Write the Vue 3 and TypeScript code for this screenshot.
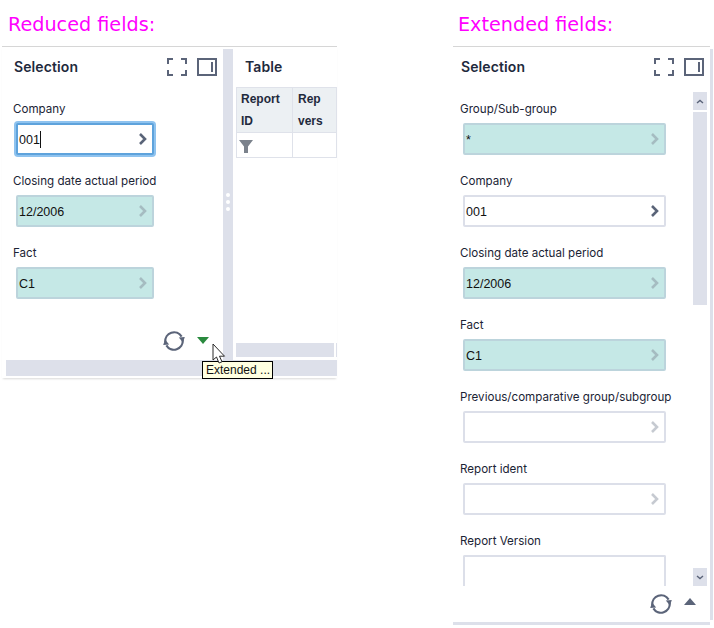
<script setup lang="ts">
interface Field { label: string; value: string; kind: 'green' | 'plain' | 'empty'; cut?: boolean; noChevron?: boolean }
const reduced: Field[] = [
  { label: 'Closing date actual period', value: '12/2006', kind: 'green' },
  { label: 'Fact', value: 'C1', kind: 'green' },
]
const extended: Field[] = [
  { label: 'Group/Sub-group', value: '*', kind: 'green' },
  { label: 'Company', value: '001', kind: 'plain' },
  { label: 'Closing date actual period', value: '12/2006', kind: 'green' },
  { label: 'Fact', value: 'C1', kind: 'green' },
  { label: 'Previous/comparative group/subgroup', value: '', kind: 'empty' },
  { label: 'Report ident', value: '', kind: 'empty' },
  { label: 'Report Version', value: '', kind: 'empty', cut: true, noChevron: true },
]
</script>

<template>
  <div class="page">
    <section class="left">
      <h2 class="caption">Reduced fields:</h2>
      <div class="frame">
        <div class="main">
          <div class="pane">
            <header class="head">
              <span class="title">Selection</span>
              <svg class="ico" width="20" height="18" viewBox="0 0 20 18"><path d="M1 6V1H6M14 1H19V6M19 12V17H14M6 17H1V12" fill="none" stroke="#5b6479" stroke-width="2" /></svg>
              <svg class="ico gap" width="20" height="18" viewBox="0 0 20 18"><rect x="1" y="1" width="18" height="16" fill="none" stroke="#5b6479" stroke-width="2" /><path d="M15 4V14" stroke="#5b6479" stroke-width="2" /></svg>
            </header>
            <div class="fields">
              <div class="field">
                <label class="lbl">Company</label>
                <div class="box focus">
                  <span class="val">001</span><i class="caret"></i>
                  <svg class="chev" width="9" height="14" viewBox="0 0 9 14"><path d="M2 2L7 7L2 12" fill="none" stroke="#5a6478" stroke-width="2.6" /></svg>
                </div>
              </div>
              <div v-for="f in reduced" :key="f.label" class="field">
                <label class="lbl">{{ f.label }}</label>
                <div class="box green">
                  <span class="val">{{ f.value }}</span>
                  <svg class="chev" width="9" height="14" viewBox="0 0 9 14"><path d="M2 2L7 7L2 12" fill="none" stroke="#a5bcc1" stroke-width="2.6" /></svg>
                </div>
              </div>
            </div>
            <footer class="foot">
              <svg width="22" height="22" viewBox="0 0 22 22"><path d="M2.3 12A8.8 8.8 0 0 1 18.6 6.6M19.7 10A8.8 8.8 0 0 1 3.4 15.4" fill="none" stroke="#5b6479" stroke-width="2.2" /><path d="M15.8 7.5L21.8 7L20 12.5ZM6.2 14.5L.2 15L2 9.5Z" fill="#5b6479" /></svg>
              <span class="tri down"></span>
            </footer>
          </div>
          <div class="splitter"><i></i><i></i><i></i></div>
          <div class="tablepane">
            <div class="head tablehead"><span class="title">Table</span></div>
            <div class="grid">
              <div class="th">Report ID</div>
              <div class="th second">Rep vers</div>
              <div class="td">
                <svg width="14" height="13" viewBox="0 0 14 13"><path d="M0 0H14L9 6.5V13H5V6.5Z" fill="#7b828c" /></svg>
              </div>
              <div class="td"></div>
            </div>
            <div class="hbar"><i></i><i></i></div>
          </div>
        </div>
        <div class="bottombar"></div>
        <div class="tip">Extended ...</div>
        <svg class="cursor" width="14" height="22" viewBox="0 0 14 22"><path d="M1 1V17L4.5 14L7 20L10 18.8L7.5 13.2H12.5Z" fill="#fff" stroke="#2a2a2a" stroke-width="1" /></svg>
      </div>
    </section>

    <section class="right">
      <h2 class="caption">Extended fields:</h2>
      <div class="xframe">
        <header class="head xhead">
          <span class="title">Selection</span>
          <svg class="ico" width="20" height="18" viewBox="0 0 20 18"><path d="M1 6V1H6M14 1H19V6M19 12V17H14M6 17H1V12" fill="none" stroke="#5b6479" stroke-width="2" /></svg>
          <svg class="ico gap" width="20" height="18" viewBox="0 0 20 18"><rect x="1" y="1" width="18" height="16" fill="none" stroke="#5b6479" stroke-width="2" /><path d="M15 4V14" stroke="#5b6479" stroke-width="2" /></svg>
        </header>
        <div class="xbody">
          <div class="xfields">
            <div v-for="f in extended" :key="f.label" class="field xfield">
              <label class="lbl">{{ f.label }}</label>
              <div class="box" :class="[f.kind, { cut: f.cut }]">
                <span class="val">{{ f.value }}</span>
                <svg v-if="!f.noChevron" class="chev" width="9" height="14" viewBox="0 0 9 14"><path d="M2 2L7 7L2 12" fill="none" :stroke="f.kind === 'plain' ? '#5a6478' : f.kind === 'green' ? '#a5bcc1' : '#c6cad1'" stroke-width="2.6" /></svg>
              </div>
            </div>
          </div>
          <div class="vbar">
            <span class="sbtn"><svg width="8" height="5" viewBox="0 0 8 5"><path d="M1 4L4 1.5L7 4" fill="none" stroke="#5b6479" stroke-width="1.4" /></svg></span>
            <span class="strack"></span>
            <span class="spacer"></span>
            <span class="sbtn"><svg width="8" height="5" viewBox="0 0 8 5"><path d="M1 1L4 3.5L7 1" fill="none" stroke="#5b6479" stroke-width="1.4" /></svg></span>
          </div>
        </div>
        <footer class="foot xfoot">
          <svg width="22" height="22" viewBox="0 0 22 22"><path d="M2.3 12A8.8 8.8 0 0 1 18.6 6.6M19.7 10A8.8 8.8 0 0 1 3.4 15.4" fill="none" stroke="#5b6479" stroke-width="2.2" /><path d="M15.8 7.5L21.8 7L20 12.5ZM6.2 14.5L.2 15L2 9.5Z" fill="#5b6479" /></svg>
          <span class="tri up"></span>
        </footer>
      </div>
    </section>
  </div>
</template>

<style>
html, body { margin: 0; background: #fff; }
</style>

<style scoped>
.page {
  width: 714px;
  height: 628px;
  display: flex;
  overflow: hidden;
  font-family: Inter, "Liberation Sans", sans-serif;
  color: #1b2435;
}
.left { width: 335px; margin-left: 2px; flex: none; }
.right { width: 261px; margin-left: 116px; flex: none; }
.caption {
  margin: 0;
  height: 46px;
  box-sizing: border-box;
  padding: 13px 0 0 6px;
  font: 400 19.2px/24px "DejaVu Sans", sans-serif;
  color: #ff00ff;
}
.right .caption { padding-left: 5px; }
.frame {
  position: relative;
  border-top: 1px solid #d6d6d6;
  box-shadow: 0 2px 2px -1px #d9d9d9;
  height: 332px;
  box-sizing: border-box;
  display: flex;
  flex-direction: column;
}
.main { display: flex; height: 313px; flex: none; }
.pane { width: 221px; flex: none; display: flex; flex-direction: column; }
.head { display: flex; align-items: center; height: 40px; padding-left: 12px; flex: none; }
.title { font-size: 14px; font-weight: 600; flex: 1; letter-spacing: 0.1px; color: #1f2a3d; margin-top: -2px; }
.ico { flex: none; }
.gap { margin-left: 10px; margin-right: 6px; }
.fields { padding: 13px 0 0 11px; flex: 1; }
.field { height: 72px; }
.lbl { display: block; height: 18px; font-size: 11.6px; line-height: 18px; margin-bottom: 5px; white-space: nowrap; }
.box {
  box-sizing: border-box;
  width: 138px;
  height: 32px;
  margin-left: 3px;
  display: flex;
  align-items: center;
  padding: 2px 5px 0 1px;
  border: 2px solid #dcdfe9;
  border-radius: 2px;
  background: #fff;
  font-family: "Liberation Sans", sans-serif;
  font-size: 12.5px;
  color: #111;
}
.val { white-space: pre; }
.chev { margin-left: auto; flex: none; margin-top: -2px; }
.caret { width: 1px; height: 17px; background: #111; flex: none; margin-top: -2px; }
.focus { border: 2px solid #5ea3dc; box-shadow: 0 0 0 2px #8fc3ef; border-radius: 2px; }
.green { background: #c5e8e6; border-color: #bcd4dc; }
.foot { display: flex; align-items: center; justify-content: flex-end; height: 38px; flex: none; padding-right: 14px; }
.foot svg { margin-right: 12px; }
.tri { width: 0; height: 0; border-left: 6px solid transparent; border-right: 6px solid transparent; }
.down { border-top: 7px solid #2a8a3e; margin-bottom: 2px; }
.up { border-bottom: 7px solid #5b6479; margin-bottom: 4px; }
.splitter {
  width: 10px;
  flex: none;
  margin-top: 2px;
  background: #dde0ea;
  display: flex;
  flex-direction: column;
  align-items: center;
  gap: 3px;
  padding-top: 144px;
  box-sizing: border-box;
}
.splitter i { width: 4px; height: 4px; border-radius: 50%; background: #fff; }
.tablepane { flex: 1; min-width: 0; display: flex; flex-direction: column; padding-left: 3px; overflow: hidden; }
.tablehead { padding-left: 9px; }
.grid {
  display: grid;
  grid-template-columns: 56px 44px;
  grid-template-rows: 45px 25px;
  width: 101px;
  border: 1px solid #dfe2ea;
  border-width: 1px 0 0 1px;
  box-sizing: border-box;
}
.th, .td { border: 1px solid #dfe2ea; border-width: 0 1px 1px 0; box-sizing: border-box; }
.th {
  background: #ecf0f3;
  font-family: "Liberation Sans", sans-serif;
  font-size: 12px;
  font-weight: 700;
  line-height: 22px;
  padding: 0 4px;
  color: #1f2a3d;
}
.th.second { padding-left: 5px; }
.td { padding: 4px 0 0 2px; }
.hbar { margin-top: auto; margin-bottom: 3px; display: flex; gap: 2px; height: 14px; }
.hbar i { background: #dde0ea; width: 98px; flex: none; }
.hbar i + i { width: 10px; }
.bottombar { margin-left: 4px; height: 16px; background: #dde0ea; flex: none; }
.tip {
  position: absolute;
  left: 200px;
  top: 314px;
  width: 71px;
  height: 18px;
  box-sizing: border-box;
  border: 1px solid #000;
  background: #ffffe1;
  font: 12px/16px "Liberation Sans", sans-serif;
  padding-left: 3px;
  color: #111;
  white-space: nowrap;
}
.cursor { position: absolute; left: 210px; top: 296px; }
.xframe {
  box-sizing: border-box;
  height: 579px;
  width: 257px;
  border-top: 1px solid #d6d6d6;
  border-bottom: 3px solid #dde0ea;
  display: flex;
  flex-direction: column;
  position: relative;
}
.xframe::after {
  content: "";
  position: absolute;
  right: -3px;
  top: 2px;
  bottom: 2px;
  width: 3px;
  background: #dde0ea;
}
.xhead { padding-left: 8px; }
.xhead .gap { margin-right: 6px; }
.xbody { flex: 1; min-height: 0; display: flex; padding-top: 5px; }
.xfields { flex: 1; overflow: hidden; padding: 8px 0 0 7px; }
.xfield .box { width: 203px; }
.box.cut { border-bottom: 0; border-bottom-left-radius: 0; border-bottom-right-radius: 0; }
.vbar { width: 14px; flex: none; margin-right: 3px; display: flex; flex-direction: column; }
.sbtn { height: 18px; background: #dde0ea; display: flex; align-items: center; justify-content: center; flex: none; }
.strack { height: 193px; margin-top: 2px; background: #dde0ea; flex: none; }
.spacer { flex: 1; }
.xfoot { height: 36px; padding-right: 14px; padding-bottom: 1px; box-sizing: border-box; }
.xfoot svg { margin-right: 12px; }
</style>
